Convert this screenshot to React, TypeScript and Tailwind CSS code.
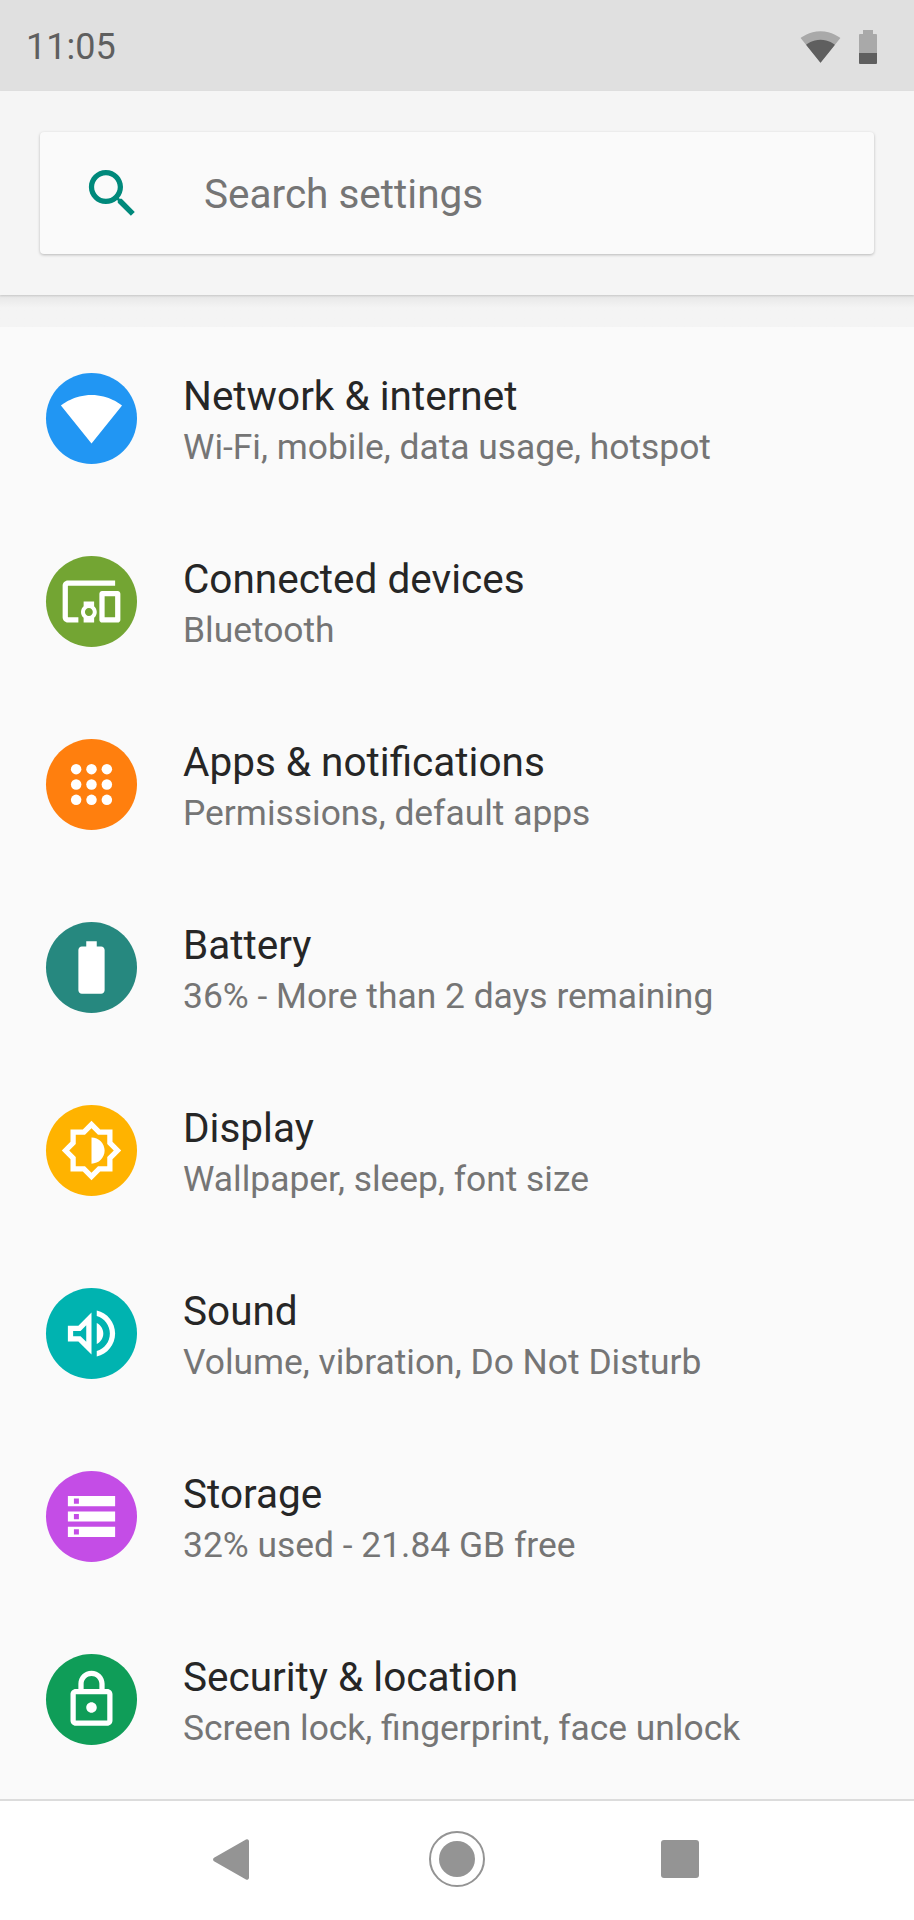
const font = "font-['Roboto',sans-serif]";

interface SettingRow {
  title: string;
  subtitle: string;
  color: string;
  icon: React.ReactNode;
}

const rows: SettingRow[] = [
  {
    title: "Network & internet",
    subtitle: "Wi-Fi, mobile, data usage, hotspot",
    color: "bg-[#2196f3]",
    icon: <path d="M12.01 21.49L23.64 7c-.45-.34-4.93-4-11.64-4C5.28 3 .81 6.66.36 7l11.63 14.49.01.01.01-.01z" />,
  },
  {
    title: "Connected devices",
    subtitle: "Bluetooth",
    color: "bg-[#73a533]",
    icon: <path d="M3 6h18V4H3c-1.1 0-2 .9-2 2v12c0 1.1.9 2 2 2h4v-2H3V6zm10 6H9v1.78c-.61.55-1 1.33-1 2.22s.39 1.67 1 2.22V20h4v-1.78c.61-.55 1-1.34 1-2.22s-.39-1.67-1-2.22V12zm-2 5.5c-.83 0-1.5-.67-1.5-1.5s.67-1.5 1.5-1.5 1.5.67 1.5 1.5-.67 1.5-1.5 1.5zM22 8h-6c-.5 0-1 .5-1 1v10c0 .5.5 1 1 1h6c.5 0 1-.5 1-1V9c0-.5-.5-1-1-1zm-1 10h-4v-8h4v8z" />,
  },
  {
    title: "Apps & notifications",
    subtitle: "Permissions, default apps",
    color: "bg-[#ff7f0e]",
    icon: (
      <>
        {[6.15, 12, 17.85].map((cy) =>
          [6.15, 12, 17.85].map((cx) => <circle key={`${cx}-${cy}`} cx={cx} cy={cy} r="2" />),
        )}
      </>
    ),
  },
  {
    title: "Battery",
    subtitle: "36% - More than 2 days remaining",
    color: "bg-[#26887f]",
    icon: <path d="M15.67 4H14V2h-4v2H8.33C7.6 4 7 4.6 7 5.33v15.33C7 21.4 7.6 22 8.33 22h7.33c.74 0 1.34-.6 1.34-1.33V5.33C17 4.6 16.4 4 15.67 4z" />,
  },
  {
    title: "Display",
    subtitle: "Wallpaper, sleep, font size",
    color: "bg-[#ffb300]",
    icon: <path d="M20 8.69V4h-4.69L12 .69 8.69 4H4v4.69L.69 12 4 15.31V20h4.69L12 23.31 15.31 20H20v-4.69L23.31 12 20 8.69zm-2 5.79V18h-3.52L12 20.48 9.52 18H6v-3.52L3.52 12 6 9.52V6h3.52L12 3.52 14.48 6H18v3.52L20.48 12 18 14.48zM12 7v10c2.76 0 5-2.24 5-5s-2.24-5-5-5z" />,
  },
  {
    title: "Sound",
    subtitle: "Volume, vibration, Do Not Disturb",
    color: "bg-[#00b3b0]",
    icon: <path d="M3 9v6h4l5 5V4L7 9H3zm7-.17v6.34L7.83 13H5v-2h2.83L10 8.83zM16.5 12c0-1.77-1.02-3.29-2.5-4.03v8.05c1.48-.73 2.5-2.25 2.5-4.02zM14 3.23v2.06c2.89.86 5 3.54 5 6.71s-2.11 5.85-5 6.71v2.06c4.01-.91 7-4.49 7-8.77 0-4.28-2.99-7.86-7-8.77z" />,
  },
  {
    title: "Storage",
    subtitle: "32% used - 21.84 GB free",
    color: "bg-[#c44de6]",
    icon: (
      <path
        fillRule="evenodd"
        d="M3 4.15h18v3.9H3zM5.3 5.1v2h1.9v-2zM3 10.05h18v3.9H3zM5.3 11v2h1.9v-2zM3 15.95h18v3.9H3zM5.3 16.9v2h1.9v-2z"
      />
    ),
  },
  {
    title: "Security & location",
    subtitle: "Screen lock, fingerprint, face unlock",
    color: "bg-[#0f9d58]",
    icon: <path d="M18 8h-1V6c0-2.76-2.24-5-5-5S7 3.24 7 6v2H6c-1.1 0-2 .9-2 2v10c0 1.1.9 2 2 2h12c1.1 0 2-.9 2-2V10c0-1.1-.9-2-2-2zM9 6c0-1.66 1.34-3 3-3s3 1.34 3 3v2H9V6zm9 14H6V10h12v10zm-6-3c1.1 0 2-.9 2-2s-.9-2-2-2-2 .9-2 2 .9 2 2 2z" />,
  },
];

function StatusBar() {
  return (
    <div className="flex h-[91px] items-center justify-between bg-[#e0e0e0] pl-[26px] pr-[37px]">
      <span className="pt-[2px] text-[36px] text-[#5f5f5f]">11:05</span>
      <div className="flex items-start gap-[18px] pt-[1px]">
        <svg viewBox="0 0 24 24" className="h-[41px] w-[41px]">
          <path fill="#a9a9a9" d="M12.01 21.49L23.64 7c-.45-.34-4.93-4-11.64-4C5.28 3 .81 6.66.36 7l11.63 14.49.01.01.01-.01z" />
          <path fill="#5f5f5f" d="M3.53 10.95l8.46 10.54.01.01.01-.01 8.46-10.54C20.04 10.62 16.81 8 12 8c-4.81 0-8.04 2.62-8.47 2.95z" />
        </svg>
        <svg viewBox="0 0 18 34" className="mt-[4px] h-[34px] w-[18px]">
          <path fill="#a9a9a9" d="M4 0h10v4h3a1 1 0 0 1 1 1v18H0V5a1 1 0 0 1 1-1h3z" />
          <path fill="#5f5f5f" d="M0 23h18v10a1 1 0 0 1-1 1H1a1 1 0 0 1-1-1z" />
        </svg>
      </div>
    </div>
  );
}

function SearchHeader() {
  return (
    <div className="relative h-[204px] bg-[#f5f5f5] px-[40px] pt-[41px] shadow-[0_1px_2px_rgba(0,0,0,0.14)]">
      <div className="flex h-[122px] items-center rounded-[4px] bg-[#fafafa] pl-[41px] shadow-[0_1px_3px_rgba(0,0,0,0.25)]">
        <svg viewBox="0 0 24 24" fill="#00897b" className="h-[63px] w-[63px] shrink-0">
          <path d="M15.5 14h-.79l-.28-.27C15.41 12.59 16 11.11 16 9.5 16 5.91 13.09 3 9.5 3S3 5.91 3 9.5 5.91 16 9.5 16c1.61 0 3.09-.59 4.23-1.57l.27.28v.79l5 4.99L20.49 19l-4.99-5zm-6 0C7.01 14 5 11.99 5 9.5S7.01 5 9.5 5 14 7.01 14 9.5 11.99 14 9.5 14z" />
        </svg>
        <span className="ml-[60px] pt-[2px] text-[40.5px] text-[#757575]">Search settings</span>
      </div>
    </div>
  );
}

function Row({ title, subtitle, color, icon }: SettingRow) {
  return (
    <div className="flex h-[183px] items-center pl-[46px]">
      <div className={`flex h-[91px] w-[91px] shrink-0 items-center justify-center rounded-full ${color}`}>
        <svg viewBox="0 0 24 24" fill="#ffffff" className="h-[63px] w-[63px]">
          {icon}
        </svg>
      </div>
      <div className="ml-[46px] pt-[5px]">
        <p className="text-[40.5px] leading-[52px] text-[#262626]">{title}</p>
        <p className="text-[35.4px] leading-[50px] text-[#757575]">{subtitle}</p>
      </div>
    </div>
  );
}

function NavBar() {
  return (
    <div className="flex flex-1 items-center border-t-2 border-[#dcdcdc] bg-white pb-[3px] pl-[213px]">
      <svg viewBox="0 0 36 41" fill="#949494" className="h-[41px] w-[36px]">
        <path d="M33 .5a2 2 0 0 1 3 1.7v36.6a2 2 0 0 1-3 1.7L1 22.2a2 2 0 0 1 0-3.4z" />
      </svg>
      <svg viewBox="0 0 56 56" className="ml-[180px] h-[56px] w-[56px]">
        <circle cx="28" cy="28" r="27" fill="none" stroke="#949494" strokeWidth="2" />
        <circle cx="28" cy="28" r="18" fill="#949494" />
      </svg>
      <div className="ml-[176px] h-[38px] w-[38px] rounded-[3px] bg-[#949494]" />
    </div>
  );
}

export default function App() {
  return (
    <div className={`flex h-[1920px] w-[914px] flex-col overflow-hidden bg-[#fafafa] ${font}`}>
      <StatusBar />
      <SearchHeader />
      <div className="h-[32px] bg-gradient-to-b from-[#e6e6e6] to-[#f4f4f4] to-40%" />
      <div className="h-[1472px]">
        {rows.map((row) => (
          <Row key={row.title} {...row} />
        ))}
      </div>
      <NavBar />
    </div>
  );
}
